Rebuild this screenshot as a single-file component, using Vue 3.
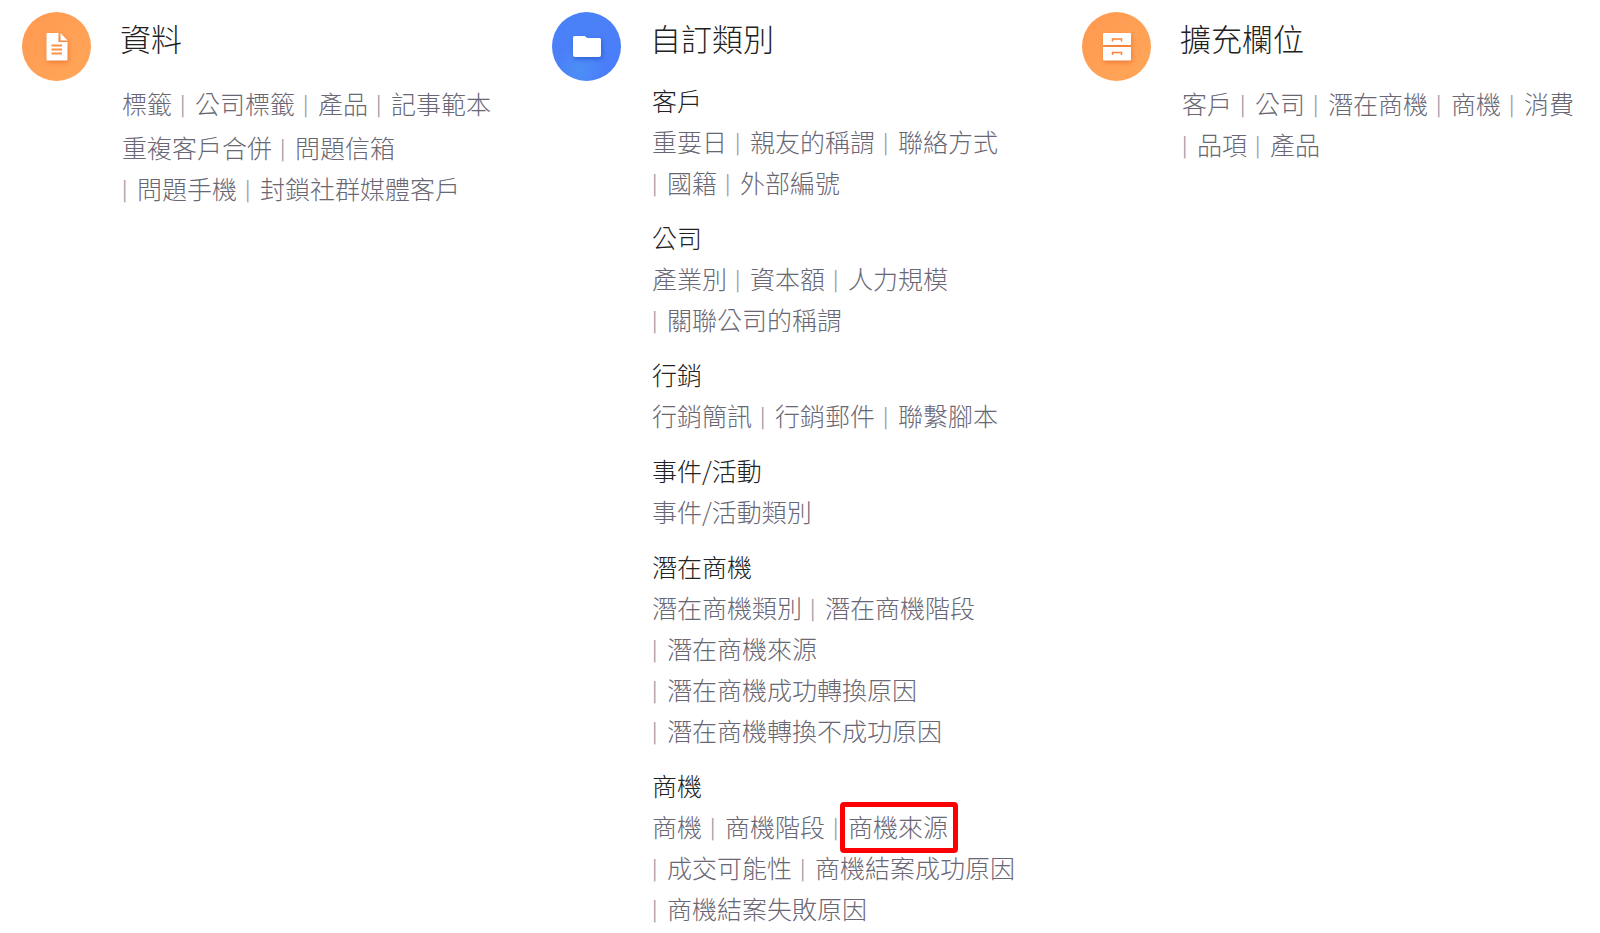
<script setup>
const columns = [
  {
    title: '資料',
    icon: 'document',
    tone: 'orange',
    groups: [
      { links: ['標籤', '公司標籤', '產品', '記事範本'] },
      { links: ['重複客戶合併', '問題信箱', '問題手機', '封鎖社群媒體客戶'] },
    ],
  },
  {
    title: '自訂類別',
    icon: 'folder',
    tone: 'blue',
    groups: [
      { name: '客戶', links: ['重要日', '親友的稱謂', '聯絡方式', '國籍', '外部編號'] },
      { name: '公司', links: ['產業別', '資本額', '人力規模', '關聯公司的稱謂'] },
      { name: '行銷', links: ['行銷簡訊', '行銷郵件', '聯繫腳本'] },
      { name: '事件/活動', links: ['事件/活動類別'] },
      {
        name: '潛在商機',
        links: ['潛在商機類別', '潛在商機階段', '潛在商機來源', '潛在商機成功轉換原因', '潛在商機轉換不成功原因'],
      },
      {
        name: '商機',
        marked: '商機來源',
        links: ['商機', '商機階段', '商機來源', '成交可能性', '商機結案成功原因', '商機結案失敗原因'],
      },
    ],
  },
  {
    title: '擴充欄位',
    icon: 'drawers',
    tone: 'orange',
    groups: [{ links: ['客戶', '公司', '潛在商機', '商機', '消費', '品項', '產品'] }],
  },
]
</script>

<template>
  <main class="settings">
    <section v-for="col in columns" :key="col.title" class="column">
      <span class="badge" :class="col.tone" aria-hidden="true">
        <svg v-if="col.icon === 'document'" class="glyph" viewBox="0 0 28 28">
          <path fill="#fff" d="M4.500 0H15.500V9H24.500V26.500Q24.500 27.500 23.500 27.500H4.500Q3.500 27.500 3.500 26.500V1Q3.500 0 4.500 0Z" />
          <path fill="#fff" d="M17.500 0L24.500 7.500H17.500Z" />
          <path stroke="#ff9144" stroke-width="2" d="M8.500 12.500H19M8.500 16.500H19M8.500 20.500H19" />
        </svg>
        <svg v-else-if="col.icon === 'folder'" class="glyph" viewBox="0 0 28 28">
          <path fill="#fff" d="M1.500 3H11.500L14.500 5H26.500Q28 5 28 6.500V22Q28 24 26 24H2Q0 24 0 22V4.500Q0 3 1.500 3Z" />
        </svg>
        <svg v-else class="glyph" viewBox="0 0 28 28">
          <path fill="#fff" d="M1 0H27Q28 0 28 1V12H0V1Q0 0 1 0ZM0 14H28V26.500Q28 27.500 27 27.500H1Q0 27.500 0 26.500Z" />
          <path fill="none" stroke="#ff8235" stroke-width="1.500" d="M9.500 8.500V6H18.500V8.500M9.500 22V19.500H18.500V22" />
        </svg>
      </span>
      <div class="content">
        <h2 class="title">{{ col.title }}</h2>
        <div class="groups" :class="{ named: col.groups[0].name }">
          <section v-for="group in col.groups" :key="group.links[0]" class="group">
            <h3 v-if="group.name" class="name">{{ group.name }}</h3>
            <ul class="links">
              <li v-for="(link, i) in group.links" :key="link" class="item">
                <span v-if="i" class="bar" aria-hidden="true">|</span>
                <a href="#" class="link" :class="{ marked: group.marked === link }">{{ link }}</a>
              </li>
            </ul>
          </section>
        </div>
      </div>
    </section>
  </main>
</template>

<style>
body {
  margin: 0;
  background: #fff;
}
</style>

<style scoped>
.settings {
  display: grid;
  grid-template-columns: repeat(3, minmax(0, 1fr));
  column-gap: 36px;
  padding: 12px 24px 0 22px;
  font-family: "Noto Sans CJK TC", sans-serif;
  font-weight: 300;
  font-size: 25px;
  line-height: 41px;
  color: #6a6775;
}
.column {
  display: flex;
  align-items: flex-start;
}
.badge {
  display: flex;
  flex: none;
  align-items: center;
  justify-content: center;
  width: 69px;
  height: 69px;
  border-radius: 50%;
}
.orange {
  background: linear-gradient(135deg, #ff9850, #ffa055 50%, #ffa658);
}
.blue {
  background:
    radial-gradient(circle at 40% 85%, #4d90f5 0, transparent 35%),
    linear-gradient(160deg, #4b82f6, #4a7cfa);
}
.glyph {
  width: 28px;
  height: 28px;
}
.orange .glyph {
  filter: drop-shadow(1px 2px 2px #e8602099);
}
.blue .glyph {
  filter: drop-shadow(1px 2px 2px #1c48b899);
}
.content {
  flex: 1;
  min-width: 0;
  padding-left: 29px;
}
.title {
  margin: 0;
  font-size: 31px;
  font-weight: 300;
  line-height: 52px;
  color: #222;
}
.groups {
  display: flex;
  flex-direction: column;
  gap: 3px;
  margin-top: 19px;
  padding-left: 2px;
}
.groups.named {
  gap: 14px;
  margin-top: 16px;
}
.name {
  margin: 0;
  font-size: 25px;
  font-weight: 300;
  line-height: 41px;
  color: #222;
}
.links {
  display: flex;
  flex-wrap: wrap;
  column-gap: 8px;
  margin: 0;
  padding: 0;
  list-style: none;
}
.item {
  display: flex;
  white-space: nowrap;
}
.bar {
  width: 15px;
  font-size: 20px;
  font-weight: 400;
  color: #a09da9;
}
.link {
  position: relative;
  color: inherit;
  text-decoration: none;
}
.marked::after {
  content: "";
  position: absolute;
  inset: -4px -10px -6px -8px;
  border: 5px solid #f00;
  border-radius: 4px;
}
</style>
